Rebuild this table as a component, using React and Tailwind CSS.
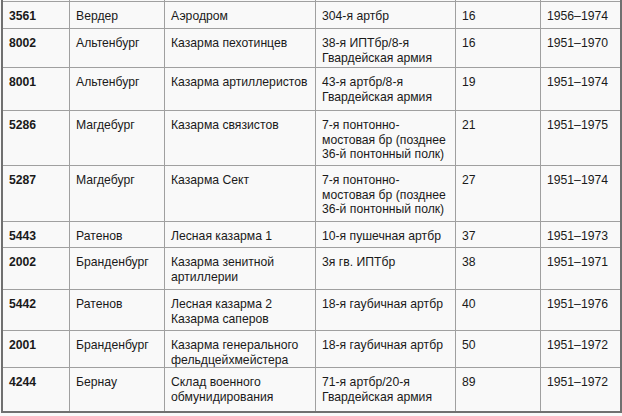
import React from "react";

const widths = ["w-[67px]", "w-[95px]", "w-[151px]", "w-[140px]", "w-[85px]", "w-[79px]"];

const rows = [
  { h: "h-[27px]", cells: ["3561", "Вердер", "Аэродром", "304-я артбр", "16", "1956–1974"] },
  { h: "h-[39px]", cells: ["8002", "Альтенбург", "Казарма пехотинцев", ["38-я ИПТбр/8-я", "Гвардейская армия"], "16", "1951–1970"] },
  { h: "h-[43px]", cells: ["8001", "Альтенбург", "Казарма артиллеристов", ["43-я артбр/8-я", "Гвардейская армия"], "19", "1951–1974"] },
  { h: "h-[55px]", cells: ["5286", "Магдебург", "Казарма связистов", ["7-я понтонно-", "мостовая бр (позднее", "36-й понтонный полк)"], "21", "1951–1975"] },
  { h: "h-[56px]", cells: ["5287", "Магдебург", "Казарма Сект", ["7-я понтонно-", "мостовая бр (позднее", "36-й понтонный полк)"], "27", "1951–1974"] },
  { h: "h-[26px]", cells: ["5443", "Ратенов", "Лесная казарма 1", "10-я пушечная артбр", "37", "1951–1973"] },
  { h: "h-[42px]", cells: ["2002", "Бранденбург", ["Казарма зенитной", "артиллерии"], "3я гв. ИПТбр", "38", "1951–1971"] },
  { h: "h-[41px]", cells: ["5442", "Ратенов", ["Лесная казарма 2", "Казарма саперов"], "18-я гаубичная артбр", "40", "1951–1976"] },
  { h: "h-[37px]", cells: ["2001", "Бранденбург", ["Казарма генерального", "фельдцейхмейстера"], "18-я гаубичная артбр", "50", "1951–1972"] },
  { h: "h-[43px]", cells: ["4244", "Бернау", ["Склад военного", "обмунидирования"], ["71-я артбр/20-я", "Гвардейская армия"], "89", "1951–1972"], last: true },
];

function Cell({ value, i }) {
  const lines = Array.isArray(value) ? value : [value];
  return (
    <div
      className={`${widths[i]} shrink-0 pl-[6px] pt-[7px] whitespace-nowrap overflow-hidden ${
        i < 5 ? "border-r border-[#a0a0a0]" : ""
      } ${i === 0 ? "font-bold" : ""}`}
    >
      {lines.map((l, k) => (
        <div key={k}>{l}</div>
      ))}
    </div>
  );
}

export default function App() {
  return (
    <div
      className="min-h-screen bg-[#f9f9f9] text-[#1a1a1a] text-[12.2px] leading-[14.5px]"
      style={{ fontFamily: '"Liberation Sans", Arial, sans-serif' }}
    >
      <div className="ml-[1px] w-[621px] border-l-2 border-r-2 border-b-2 border-[#707070]">
        {/* cut-off row above */}
        <div className="flex h-[2px] border-b border-[#a0a0a0]">
          {widths.map((w, i) => (
            <div key={i} className={`${w} shrink-0 ${i < 5 ? "border-r border-[#a0a0a0]" : ""}`} />
          ))}
        </div>
        {rows.map((r, idx) => (
          <div key={idx} className={`flex ${r.h} ${r.last ? "" : "border-b border-[#a0a0a0]"}`}>
            {r.cells.map((c, i) => (
              <Cell key={i} value={c} i={i} />
            ))}
          </div>
        ))}
      </div>
    </div>
  );
}
